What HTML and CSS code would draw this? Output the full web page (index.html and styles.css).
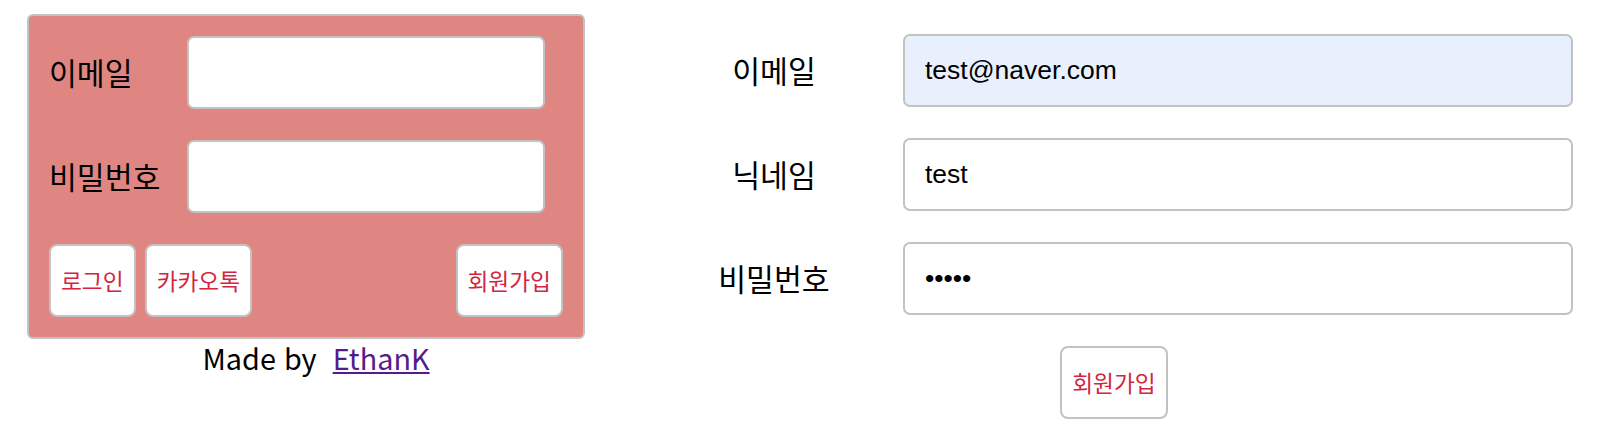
FILE: index.html
```html
<!DOCTYPE html>
<html lang="ko">
<head>
<meta charset="utf-8">
<title>로그인 / 회원가입</title>
<link rel="stylesheet" href="styles.css">
</head>
<body>
<div class="page">
  <section class="login-col">
    <form class="login-card">
      <div class="login-row">
        <label class="login-label" for="login-email">이메일</label>
        <input class="field" id="login-email" type="text">
      </div>
      <div class="login-row">
        <label class="login-label" for="login-pw">비밀번호</label>
        <input class="field" id="login-pw" type="password">
      </div>
      <div class="login-actions">
        <button type="button" class="btn">로그인</button>
        <button type="button" class="btn">카카오톡</button>
        <button type="button" class="btn btn-push">회원가입</button>
      </div>
    </form>
    <p class="credit">Made by <a class="author" href="#">EthanK</a></p>
  </section>

  <section class="signup">
    <form class="signup-grid">
      <label class="signup-label" for="su-email">이메일</label>
      <input class="field field-autofill" id="su-email" type="text" value="test@naver.com">
      <label class="signup-label" for="su-nick">닉네임</label>
      <input class="field" id="su-nick" type="text" value="test">
      <label class="signup-label" for="su-pw">비밀번호</label>
      <input class="field" id="su-pw" type="password" value="12345">
    </form>
    <div class="signup-actions">
      <button type="button" class="btn">회원가입</button>
    </div>
  </section>
</div>
</body>
</html>
```

FILE: styles.css
```css
* {
  box-sizing: border-box;
}

html, body {
  margin: 0;
  padding: 0;
  background: #ffffff;
}

body {
  font-family: "Noto Sans CJK KR", "Noto Sans", sans-serif;
  color: #000;
}

.page {
  display: flex;
  align-items: flex-start;
  padding: 14px 0 0 27px;
}

.login-col {
  width: 558px;
  display: flex;
  flex-direction: column;
}

.login-card {
  background: #e08682;
  border: 2px solid #c2c2c2;
  border-radius: 6px;
  padding: 20px;
  display: flex;
  flex-direction: column;
  gap: 31px;
}

.login-row {
  display: flex;
  align-items: center;
  height: 73px;
}

.login-label {
  width: 138px;
  font-size: 30.3px;
  line-height: 1;
}

.field {
  height: 73px;
  border: 2px solid #c2c2c2;
  border-radius: 7px;
  background: #fff;
  padding: 0 20px;
  font-family: "Liberation Sans", Arial, sans-serif;
  font-size: 26.5px;
  color: #000;
  outline: none;
}

.login-row .field {
  width: 358px;
}

.field-autofill {
  background: #e8f0fe;
}

.login-actions {
  display: flex;
  gap: 9px;
  height: 73px;
}

.btn {
  height: 73px;
  padding: 0 10px;
  border: 2px solid #c2c2c2;
  border-radius: 8px;
  background: #fff;
  color: #d3253f;
  font-family: "Noto Sans CJK KR", "Noto Sans", sans-serif;
  font-size: 22.7px;
  cursor: pointer;
}

.btn-push {
  margin-left: auto;
}

.credit {
  margin: 0;
  padding-left: 20px;
  text-align: center;
  font-size: 28.8px;
  line-height: 38px;
}

.author {
  margin-left: 8px;
  color: #551a8b;
}

.signup {
  margin: 20px 0 0 60px;
  width: 928px;
}

.signup-grid {
  display: grid;
  grid-template-columns: 258px 670px;
  row-gap: 31px;
  align-items: center;
}

.signup-label {
  text-align: center;
  font-size: 30.3px;
  line-height: 1;
}

.signup-actions {
  display: flex;
  justify-content: center;
  padding: 31px 0 0 10px;
}
```
